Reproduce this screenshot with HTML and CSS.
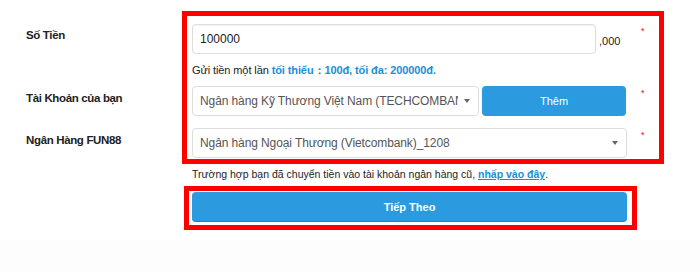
FILE: index.html
```html
<!DOCTYPE html>
<html>
<head>
    <title>Gửi Tiền</title>
    <link rel="stylesheet" href="styles.css">
</head>
<body>
    <div class="page">
        <form class="deposit">
            <div class="labels">
                <div class="label label-amount">Số Tiền</div>
                <div class="label label-account">Tài Khoản của bạn</div>
                <div class="label label-bank">Ngân Hàng FUN88</div>
            </div>
            <div class="fields">
                <div class="mark mark-main">
                    <div class="row row-amount">
                        <div class="cell">
                            <input type="text" class="input input-amount" value="100000">
                            <span class="suffix">,000</span>
                        </div>
                        <span class="req">*</span>
                    </div>
                    <div class="hint">Gửi tiền một lần <b>tối thiểu：100đ, tối đa: 200000đ.</b></div>
                    <div class="row row-account">
                        <div class="cell">
                            <div class="select select-account">
                                <span class="select-text">Ngân hàng Kỹ Thương Việt Nam (TECHCOMBANK)</span>
                                <span class="caret"></span>
                            </div>
                            <button type="button" class="btn btn-add">Thêm</button>
                        </div>
                        <span class="req">*</span>
                    </div>
                    <div class="row row-bank">
                        <div class="cell">
                            <div class="select select-bank">
                                <span class="select-text">Ngân hàng Ngoại Thương (Vietcombank)_1208</span>
                                <span class="caret"></span>
                            </div>
                        </div>
                        <span class="req">*</span>
                    </div>
                </div>
                <div class="note">Trường hợp bạn đã chuyển tiền vào tài khoản ngân hàng cũ, <a href="#">nhấp vào đây</a>.</div>
                <div class="mark mark-next">
                    <button type="button" class="btn btn-next">Tiếp Theo</button>
                </div>
            </div>
        </form>
    </div>
</body>
</html>
```

FILE: styles.css
```css
body {
    margin: 0;
    font-family: "Liberation Sans", Arial, sans-serif;
    background: #fdfdfd;
    color: #222;
}
.page {
    background: #fff;
    height: 240px;
    padding-top: 11px;
    box-sizing: border-box;
}
.deposit {
    display: flex;
}
.labels {
    width: 156px;
    padding-left: 26px;
}
.label {
    font-size: 11.5px;
    font-weight: bold;
    letter-spacing: -0.35px;
    line-height: 16px;
    color: #222;
}
.label-amount {
    margin-top: 16px;
}
.label-account {
    margin-top: 47px;
}
.label-bank {
    margin-top: 26px;
}
.mark {
    border: 5px solid #f00;
}
.mark-main {
    width: 467px;
    padding: 8px 0 1px 5px;
}
.row {
    display: grid;
    grid-template-columns: 435px 1fr;
}
.row-account {
    margin-top: 8px;
}
.row-bank {
    margin-top: 12px;
}
.cell {
    display: flex;
    align-items: center;
}
.req {
    color: #f00;
    font-size: 9px;
    line-height: 10px;
    padding-left: 14px;
    margin-top: 2px;
}
.input {
    width: 404px;
    height: 30px;
    box-sizing: border-box;
    border: 1px solid #ddd;
    border-radius: 4px;
    padding: 0 7px;
    font-family: inherit;
    font-size: 12px;
    color: #222;
    background: #fff;
    box-shadow: inset 0 1px 1px rgba(0, 0, 0, 0.04);
}
.suffix {
    font-size: 11px;
    margin-left: 3px;
    margin-top: 3px;
}
.hint {
    margin-top: 8px;
    font-size: 11px;
    letter-spacing: -0.1px;
    line-height: 16px;
    color: #222;
}
.hint b {
    color: #1a8ed8;
}
.select {
    position: relative;
    height: 30px;
    box-sizing: border-box;
    border: 1px solid #ddd;
    border-radius: 4px;
    background: #fff;
    padding: 0 20px 0 7px;
    display: flex;
    align-items: center;
    overflow: hidden;
}
.select-text {
    font-size: 12px;
    letter-spacing: -0.1px;
    color: #555;
    white-space: nowrap;
    overflow: hidden;
    text-overflow: clip;
}
.caret {
    position: absolute;
    right: 8px;
    top: 12px;
    border-left: 3px solid transparent;
    border-right: 3px solid transparent;
    border-top: 4px solid #666;
}
.select-account {
    width: 287px;
}
.select-bank {
    width: 435px;
}
.btn {
    border: none;
    border-radius: 4px;
    background: #2b9ade;
    color: #fff;
    font-family: inherit;
    cursor: pointer;
}
.btn-add {
    width: 144px;
    height: 30px;
    margin-left: 3px;
    font-size: 11px;
}
.note {
    margin: 2px 0 0 10px;
    font-size: 10.5px;
    line-height: 16px;
    color: #222;
}
.note a {
    color: #1a8ed8;
    font-weight: bold;
}
.mark-next {
    width: 439px;
    margin: 4px 0 0 2px;
    padding: 1px 1px 4px 3px;
}
.btn-next {
    display: block;
    width: 435px;
    height: 29px;
    font-size: 11px;
    font-weight: bold;
    box-shadow: 0 1px 0 #2380bd;
}
```
